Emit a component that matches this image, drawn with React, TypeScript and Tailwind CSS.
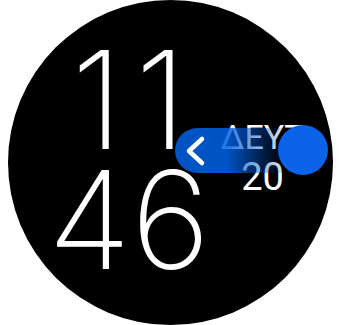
export default function App() {
  return (
    <div className="flex h-[325px] w-[340px] justify-center bg-white">
      <div className="relative h-[325px] w-[325px] overflow-hidden rounded-full bg-black">
        {/* hours / minutes */}
        <div className="flex flex-col items-center pt-[40px] pr-[82px] font-['Inter',sans-serif] text-[136px] font-[150] leading-[120px] text-white">
          <span className="pl-[12px] tracking-[12px]">11</span>
          <span>46</span>
        </div>

        {/* date, sits under the drawer handle */}
        <div className="absolute left-[213px] top-[120px] flex flex-col items-center gap-[4px] font-['Roboto',sans-serif] leading-none text-white">
          <span className="text-[34px]">ΔΕΥΤ</span>
          <span className="text-[38px]">20</span>
        </div>

        {/* drawer handle */}
        <div className="absolute left-[167px] top-[128px] flex h-[45px] w-[130px] items-center rounded-full bg-linear-to-r from-[#0062e6]/85 from-40% to-black/10 to-85% pl-[9px]">
          <svg width="24" height="32" viewBox="0 0 24 32" fill="none">
            <polyline points="18,4 5,16 18,28" stroke="white" strokeWidth="4.5" strokeLinecap="round" strokeLinejoin="round" />
          </svg>
        </div>
        <div className="absolute left-[270px] top-[125px] h-[50px] w-[50px] rounded-full bg-[#0a63e8]" />
      </div>
    </div>
  )
}
